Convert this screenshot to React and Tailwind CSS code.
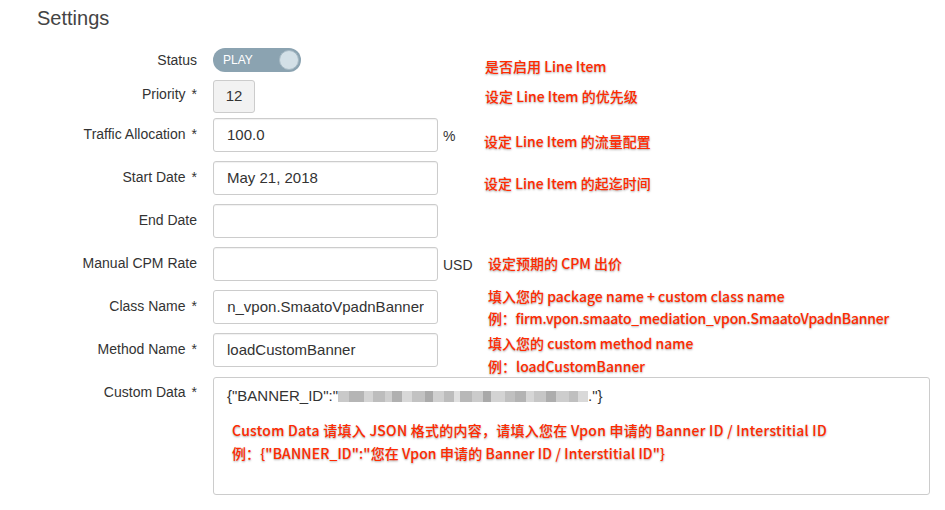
import React from 'react';

const redNote =
  "font-['Noto_Sans_CJK_SC','Noto_Sans',sans-serif] font-medium text-[14px] text-[#ff2a00] whitespace-nowrap [text-shadow:0_1px_2px_rgba(0,0,0,0.35),0_0_2px_#fff]";

const blurBlocks = [
  ['#c9c9c9', 11], ['#b5b5b5', 15], ['#d4d4d4', 9], ['#bdbdbd', 12], ['#cfcfcf', 7], ['#b0b0b0', 10],
  ['#d8d8d8', 10], ['#c2c2c2', 13], ['#aaaaaa', 8], ['#d0d0d0', 11], ['#bcbcbc', 10], ['#e0e0e0', 6],
  ['#b8b8b8', 12], ['#cbcbcb', 11], ['#a9a9a9', 8], ['#d3d3d3', 14], ['#c0c0c0', 10], ['#b3b3b3', 11],
  ['#d6d6d6', 8], ['#c6c6c6', 12], ['#adadad', 10], ['#cdcdcd', 13], ['#bfbfbf', 9], ['#d9d9d9', 10],
];

const Label = ({ children, required, pt = 'pt-[6px]' }) => (
  <div className={`w-[197px] shrink-0 text-right text-[14px] leading-[20px] ${pt}`}>
    {children}
    {required && <span className="ml-[6px]">*</span>}
  </div>
);

const Box = ({ children }) => (
  <div className="ml-[16px] w-[225px] h-[34px] shrink-0 border border-[#cccccc] rounded-[3px] bg-white shadow-[inset_0_1px_1px_rgba(0,0,0,0.06)] flex items-center px-[13px] text-[15px] text-[#333]">
    {children}
  </div>
);

const Suffix = ({ children }) => (
  <div className="w-[47px] shrink-0 pl-[5px] pt-[8px] text-[14px] leading-[20px]">{children}</div>
);

export default function App() {
  return (
    <div className="w-[945px] h-[510px] bg-white overflow-hidden font-['Liberation_Sans',Arial,sans-serif] text-[#333]">
      <div className="h-[40px] pl-[37px] pt-[5px] text-[20px] leading-[26px] text-[#444]">Settings</div>

      {/* Status */}
      <div className="flex mt-[8px] h-[24px]">
        <Label pt="pt-[2px]">Status</Label>
        <div className="ml-[16px] w-[88px] h-[24px] rounded-full bg-[#8ba3b1] flex items-center justify-between pl-[10px] pr-[2px]">
          <span className="text-[12px] text-white">PLAY</span>
          <span className="w-[20px] h-[20px] rounded-full bg-[#d3e0e7] border border-[#a7bac5]" />
        </div>
        <div className="ml-[184px] mt-[8px] leading-[20px]">
          <span className={redNote}>是否启用 Line Item</span>
        </div>
      </div>

      {/* Priority */}
      <div className="flex mt-[8px] h-[33px]">
        <Label required pt="pt-[4px]">Priority</Label>
        <div className="ml-[16px] w-[42px] h-[33px] border border-[#cccccc] rounded-[3px] bg-[#f2f2f2] flex items-center justify-center text-[15px]">
          12
        </div>
        <div className="ml-[230px] mt-[6px] leading-[20px]">
          <span className={redNote}>设定 Line Item 的优先级</span>
        </div>
      </div>

      {/* Traffic Allocation */}
      <div className="flex mt-[5px] h-[34px]">
        <Label required>Traffic Allocation</Label>
        <Box>100.0</Box>
        <Suffix>%</Suffix>
        <div className="-ml-[1px] mt-[13px] leading-[20px]">
          <span className={redNote}>设定 Line Item 的流量配置</span>
        </div>
      </div>

      {/* Start Date */}
      <div className="flex mt-[9px] h-[34px]">
        <Label required>Start Date</Label>
        <Box>May 21, 2018</Box>
        <Suffix />
        <div className="-ml-[1px] mt-[12px] leading-[20px]">
          <span className={redNote}>设定 Line Item 的起迄时间</span>
        </div>
      </div>

      {/* End Date */}
      <div className="flex mt-[9px] h-[34px]">
        <Label>End Date</Label>
        <Box />
      </div>

      {/* Manual CPM Rate */}
      <div className="flex mt-[9px] h-[34px]">
        <Label>Manual CPM Rate</Label>
        <Box />
        <Suffix>USD</Suffix>
        <div className="ml-[3px] mt-[6px] leading-[20px]">
          <span className={redNote}>设定预期的 CPM 出价</span>
        </div>
      </div>

      {/* Class Name */}
      <div className="flex mt-[9px] h-[34px]">
        <Label required>Class Name</Label>
        <div className="ml-[16px] w-[225px] h-[34px] shrink-0 border border-[#cccccc] rounded-[3px] bg-white flex items-center px-[13px] text-[15px]">
          <div className="w-full overflow-hidden whitespace-nowrap flex justify-end">
            <span>firm.vpon.smaato_mediation_vpon.SmaatoVpadnBanner</span>
          </div>
        </div>
        <Suffix />
        <div className="ml-[3px] -mt-[5px] leading-[22px] flex flex-col">
          <span className={redNote}>填入您的 package name + custom class name</span>
          <span className={`${redNote} tracking-[-0.2px]`}>例：firm.vpon.smaato_mediation_vpon.SmaatoVpadnBanner</span>
        </div>
      </div>

      {/* Method Name */}
      <div className="flex mt-[9px] h-[34px]">
        <Label required>Method Name</Label>
        <Box>loadCustomBanner</Box>
        <Suffix />
        <div className="ml-[3px] -mt-[1px] leading-[23px] flex flex-col">
          <span className={redNote}>填入您的 custom method name</span>
          <span className={redNote}>例：loadCustomBanner</span>
        </div>
      </div>

      {/* Custom Data */}
      <div className="flex mt-[10px] h-[118px]">
        <Label required pt="pt-[5px]">Custom Data</Label>
        <div className="ml-[16px] w-[717px] h-[118px] shrink-0 border border-[#cccccc] rounded-[3px] bg-white pl-[13px] pt-[8px]">
          <div className="flex items-center text-[15px] leading-[20px] whitespace-nowrap">
            <span>{'{"BANNER_ID":"'}</span>
            <span className="flex h-[11px] blur-[0.6px]">
              {blurBlocks.map(([c, w], i) => (
                <span key={i} className="h-full" style={{ backgroundColor: c, width: w }} />
              ))}
            </span>
            <span>{'."}'}</span>
          </div>
          <div className="mt-[13px] pl-[5px] leading-[23px] flex flex-col">
            <span className={`${redNote} tracking-[0.25px]`}>
              Custom Data 请填入 JSON 格式的内容，请填入您在 Vpon 申请的 Banner ID / Interstitial ID
            </span>
            <span className={`${redNote} tracking-[0.1px]`}>{'例：{"BANNER_ID":"您在 Vpon 申请的 Banner ID / Interstitial ID"}'}</span>
          </div>
        </div>
      </div>
    </div>
  );
}
